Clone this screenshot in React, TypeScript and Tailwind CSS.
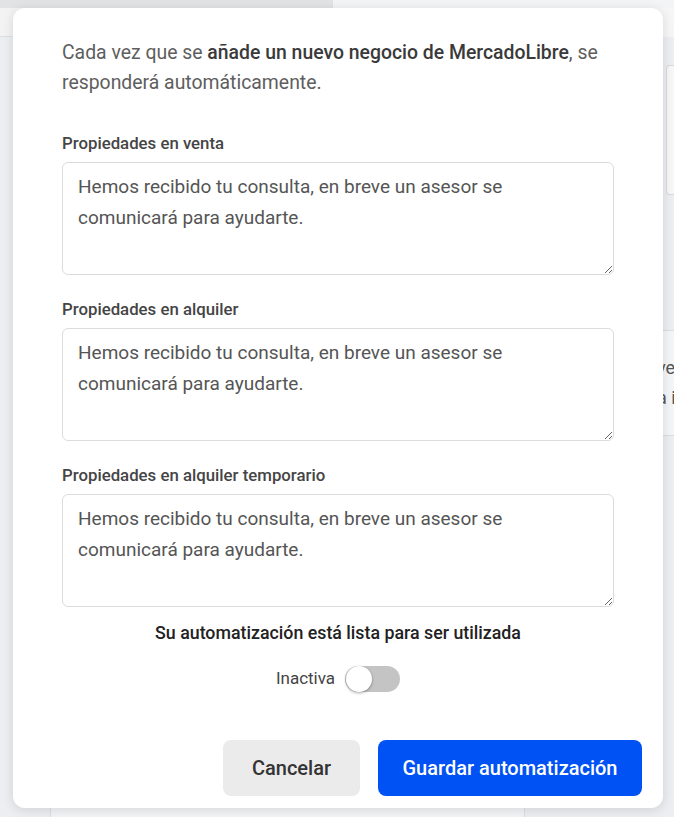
import React from "react";

const font = { fontFamily: "Roboto, 'Noto Sans', Arial, sans-serif" };

function Field({ label }: { label: string }) {
  return (
    <div className="flex flex-col">
      <label className="text-[16.8px] leading-[20px] font-medium text-[#454545] mb-[9px]">{label}</label>
      <textarea
        className="w-full h-[113px] rounded-[6px] border border-[#dcdcdc] bg-white px-[15px] pt-[8px] text-[19px] leading-[31px] text-[#555] outline-none"
        defaultValue="Hemos recibido tu consulta, en breve un asesor se comunicará para ayudarte."
      />
    </div>
  );
}

export default function App() {
  return (
    <div className="relative w-[674px] h-[817px] overflow-hidden bg-[#eceef1]" style={font}>
      {/* background page (behind overlay) */}
      <div className="flex h-[8px]">
        <div className="w-[333px] bg-[#e2e3e5]" />
        <div className="flex-1 bg-[#f3f4f5]" />
      </div>
      <div className="flex h-[29px]">
        <div className="w-[333px] bg-[#f3f3f4] border-b border-[#dedfe1]" />
        <div className="flex-1 bg-[#f6f6f7]" />
      </div>
      <div className="flex justify-end pt-[28px] pr-0">
        <div className="w-[8px] h-[130px] rounded-l-[4px] border border-r-0 border-[#d8d9db] bg-[#f7f7f8]" />
      </div>
      <div className="flex justify-end mt-[135px]">
        <div className="w-[20px] h-[106px] bg-[#f4f5f6] border-t border-b border-[#dcdde0] flex flex-col justify-center text-[18px] leading-[30px] text-[#555] overflow-hidden whitespace-nowrap pl-[3px]">
          <span>ve</span>
          <span>a i</span>
        </div>
      </div>
      <div className="ml-[50px] mt-[372px] w-[475px] h-[40px] bg-[#f3f4f5] border-x border-[#dcdde0] pl-[27px] pt-[3px] text-[18px] text-[#444] whitespace-nowrap">
        <b className="font-medium">MercadoLibre</b>, se responderá automáticamente.
      </div>

      {/* modal overlay */}
      <div className="absolute left-[13px] top-[8px] w-[650px] h-[800px] rounded-[12px] bg-white shadow-[0_2px_12px_rgba(0,0,0,0.12)] flex flex-col">
        <div className="px-[49px] pt-[30px]">
          <p className="text-[19.4px] leading-[30px] text-[#5e5e5e]">
            Cada vez que se <span className="font-medium text-[#3a3a3a]">añade un nuevo negocio de MercadoLibre</span>, se responderá automáticamente.
          </p>
          <div className="mt-[35px] flex flex-col gap-[24px]">
            <Field label="Propiedades en venta" />
            <Field label="Propiedades en alquiler" />
            <Field label="Propiedades en alquiler temporario" />
          </div>
          <p className="mt-[15px] text-center text-[17.8px] leading-[22px] font-medium text-[#222]">
            Su automatización está lista para ser utilizada
          </p>
          <div className="mt-[22px] flex items-center justify-center gap-[10px]">
            <span className="text-[17px] text-[#444]">Inactiva</span>
            <div className="relative w-[55px] h-[26px] rounded-full bg-[#c4c4c4]">
              <span className="absolute left-[1px] top-0 w-[26px] h-[26px] rounded-full bg-white shadow-[0_1px_3px_rgba(0,0,0,0.35)]" />
            </div>
          </div>
        </div>
        <div className="mt-auto mb-[12px] mr-[21px] flex justify-end gap-[18px]">
          <button className="w-[137px] h-[56px] rounded-[8px] bg-[#ebebeb] text-[20px] font-medium text-[#333]">
            Cancelar
          </button>
          <button className="w-[264px] h-[56px] rounded-[8px] bg-[#0052f5] text-[20px] font-medium text-white">
            Guardar automatización
          </button>
        </div>
      </div>
    </div>
  );
}
